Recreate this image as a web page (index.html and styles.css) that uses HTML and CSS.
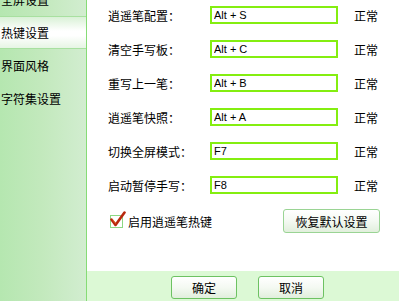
FILE: index.html
```html
<!DOCTYPE html>
<html lang="zh-CN">
<head>
  <meta charset="UTF-8">
  <title>热键设置</title>
  <link rel="stylesheet" href="styles.css">
</head>
<body>
  <div class="window">
    <!-- 左侧导航 -->
    <ul class="nav">
      <li class="nav-item">全屏设置</li>
      <li class="nav-item active">热键设置</li>
      <li class="nav-item">界面风格</li>
      <li class="nav-item">字符集设置</li>
    </ul>

    <div class="main">
      <div class="content">
        <div class="form">
          <label class="label">逍遥笔配置：</label>
          <input class="hotkey" type="text" value="Alt + S">
          <span class="status">正常</span>

          <label class="label">清空手写板：</label>
          <input class="hotkey" type="text" value="Alt + C">
          <span class="status">正常</span>

          <label class="label">重写上一笔：</label>
          <input class="hotkey" type="text" value="Alt + B">
          <span class="status">正常</span>

          <label class="label">逍遥笔快照：</label>
          <input class="hotkey" type="text" value="Alt + A">
          <span class="status">正常</span>

          <label class="label">切换全屏模式：</label>
          <input class="hotkey" type="text" value="F7">
          <span class="status">正常</span>

          <label class="label">启动暂停手写：</label>
          <input class="hotkey" type="text" value="F8">
          <span class="status">正常</span>
        </div>

        <div class="options">
          <label class="check">
            <span class="check-box">
              <svg class="check-mark" width="16" height="17" viewBox="0 0 16 17">
                <polyline points="1.5,8.5 5.5,14 14.5,1.5" fill="none" stroke="#b8280e" stroke-width="2.6" stroke-linejoin="round" stroke-linecap="round"/>
                <polyline points="2.5,8.5 5.8,12.6" fill="none" stroke="#e8682a" stroke-width="1"/>
              </svg>
            </span>
            启用逍遥笔热键
          </label>
          <button class="button restore">恢复默认设置</button>
        </div>
      </div>

      <div class="footer">
        <button class="button footer-btn">确定</button>
        <button class="button footer-btn">取消</button>
      </div>
    </div>
  </div>
</body>
</html>
```

FILE: styles.css
```css
body {
  margin: 0;
  font-family: "Noto Sans CJK SC", "Liberation Sans", sans-serif;
  font-size: 12px;
  color: #000;
  overflow: hidden;
}
.window {
  display: flex;
  width: 399px;
  height: 301px;
}
.nav {
  list-style: none;
  margin: 0;
  padding: 0;
  width: 86px;
  flex-shrink: 0;
  border-right: 1px solid #86dc76;
  background: linear-gradient(to right, #b5e7b0, #c3e9bd 50%, #d2edd0);
  overflow: hidden;
}
.nav-item {
  height: 33px;
  line-height: 33px;
  padding-left: 1px;
  white-space: nowrap;
}
.nav-item:first-child {
  margin-top: -17px;
}
.nav-item.active {
  box-sizing: border-box;
  border-top: 1px solid #a8e0a0;
  border-bottom: 1px solid #a8e0a0;
  line-height: 31px;
  background: linear-gradient(#d9f1d6, #ffffff 45%, #ffffff 60%, #e6f5e4);
}
.main {
  flex: 1;
  display: flex;
  flex-direction: column;
  background: #fff;
}
.content {
  flex: 1;
  padding: 6px 19px 0 21px;
}
.form {
  display: grid;
  grid-template-columns: 86px 128px auto;
  column-gap: 16px;
  row-gap: 16px;
  align-items: center;
}
.label {
  white-space: nowrap;
}
.hotkey {
  box-sizing: border-box;
  width: 128px;
  height: 18px;
  margin: 0;
  padding: 0 0 0 2px;
  border: 2px solid #84ee10;
  font-family: "Liberation Sans", sans-serif;
  font-size: 11px;
  color: #000;
  outline: none;
}
.options {
  display: flex;
  justify-content: space-between;
  align-items: center;
  margin-top: 15px;
}
.check {
  display: flex;
  align-items: center;
  gap: 5px;
  margin-left: 2px;
}
.check-box {
  position: relative;
  width: 11px;
  height: 11px;
  border: 1px solid #8cd884;
  background: #fff;
}
.check-mark {
  position: absolute;
  left: -1px;
  top: -5px;
}
.button {
  font-family: "Noto Sans CJK SC", sans-serif;
  font-size: 12px;
  color: #000;
  border: 1px solid #9ad494;
  border-radius: 3px;
  background: linear-gradient(#ffffff, #f4f9f2 50%, #e1efdc);
  padding: 0;
  cursor: pointer;
}
.restore {
  width: 97px;
  height: 24px;
}
.footer {
  height: 30px;
  box-sizing: border-box;
  background: #dcf9d5;
  display: flex;
  gap: 21px;
  padding: 5px 0 0 84px;
}
.footer-btn {
  width: 66px;
  height: 23px;
  border-color: #6dc262;
}
```
